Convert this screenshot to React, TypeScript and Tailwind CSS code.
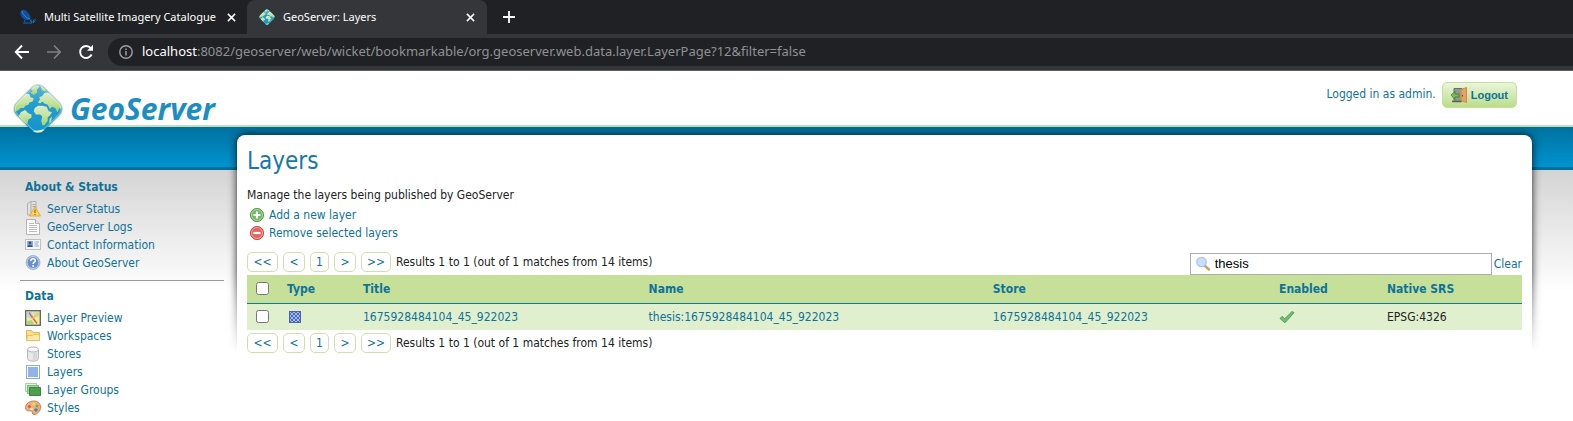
import type { ReactNode } from "react";

function Globe({ className }: { className: string }) {
  return (
    <svg viewBox="0 0 52 52" className={className} aria-hidden="true">
      <defs>
        <linearGradient id="sea" x1="0" y1="0" x2="1" y2="1">
          <stop offset="0" stopColor="#6dbbd8" />
          <stop offset="0.4" stopColor="#279ccf" />
          <stop offset="1" stopColor="#0f93cb" />
        </linearGradient>
        <linearGradient id="land" x1="0" y1="0" x2="0" y2="1">
          <stop offset="0" stopColor="#dcecd0" />
          <stop offset="0.5" stopColor="#c5e39c" />
          <stop offset="1" stopColor="#9ad56c" />
        </linearGradient>
        <clipPath id="diamond">
          <rect x="8" y="8" width="36" height="36" rx="8" transform="rotate(45 26 26)" />
        </clipPath>
      </defs>
      <rect x="7" y="7" width="38" height="38" rx="9" transform="rotate(45 26 26)" fill="#2a6070" opacity="0.25" />
      <rect x="8" y="8" width="36" height="36" rx="8" transform="rotate(45 26 26)" fill="url(#sea)" />
      <g clipPath="url(#diamond)" fill="url(#land)">
        <path d="M2 24 L8 17 L14 12 L18 12 L19 15 L22 16 L21 19 L18 20 L17 22 L14 23 L13 25 L10 25 L8 27 L4 29Z" />
        <path d="M10 29 L14 27 L17 30 L20 31 L20 34 L17 36 L16 40 L12 38 L8 33Z" />
        <path d="M19 6 L26 3 L27 6 L25 8 L25 11 L22 13 L19 11 L21 9Z" />
        <path d="M28 4 L33 7 L33 10 L30 9Z" />
        <path d="M26 20 L28 17 L27 15 L30 14 L32 11 L36 11 L39 13 L50 22 L50 27 L46 25 L44 29 L42 25 L39 24 L37 26 L35 22 L32 21 L30 19 L28 21Z" />
        <path d="M23 25 L26 23 L30 23 L34 24 L36 28 L39 29 L37 32 L35 34 L35 37 L32 41 L30 41 L29 37 L30 33 L28 31 L24 31 L22 28Z" />
        <path d="M37 35 L39 33 L38 38 L36 39Z" />
        <path d="M18 48 L22 46 L26 46 L30 45 L34 46 L30 52 L22 52Z" />
      </g>
      <rect x="9" y="9" width="34" height="34" rx="7" transform="rotate(45 26 26)" fill="none" stroke="#ffffff" strokeOpacity="0.3" strokeWidth="1" />
    </svg>
  );
}

function Icon({ children, className = "size-4" }: { children: ReactNode; className?: string }) {
  return (
    <svg viewBox="0 0 16 16" className={className + " shrink-0"} aria-hidden="true">
      {children}
    </svg>
  );
}

const icons = {
  status: (
    <Icon>
      <path d="M2.500 2.500 6 .5h5v11l-3 2.500H2.500z" fill="#e2e2e2" stroke="#b0b0b0" />
      <path d="M6 1v12M7.500 3.500h3M7.500 5.500h3" stroke="#a8a8a8" fill="none" />
      <path d="M10 5.500 15.500 15h-11z" fill="#fcd35c" stroke="#dfaa3a" strokeLinejoin="round" />
      <path d="M10 8.500v3.500M10 13v1" stroke="#8a6a24" strokeWidth="1.200" />
    </Icon>
  ),
  page: (
    <Icon>
      <path d="M1.500.5h9l4 4v11h-13z" fill="#fafafa" stroke="#b4b4b4" />
      <path d="M10.500.5v4h4" fill="#e4e4e4" stroke="#b4b4b4" />
      <path d="M4 4.500h5M4 6.500h8M4 8.500h8M4 10.500h8M4 12.500h8" stroke="#bcbcbc" />
    </Icon>
  ),
  card: (
    <Icon>
      <rect x=".5" y="2.500" width="15" height="10" fill="#f6f6f6" stroke="#c0c0c0" />
      <rect x="2" y="4" width="6" height="6" fill="#86aede" />
      <circle cx="5" cy="6" r="1.400" fill="#3a5585" />
      <path d="M2.500 10c0-3 5-3 5 0z" fill="#3a5585" />
      <path d="M9.500 5H14M9.500 7H13M9.500 9H14" stroke="#8fa9cc" />
    </Icon>
  ),
  help: (
    <Icon>
      <circle cx="8" cy="7.500" r="7" fill="#6a90cc" stroke="#a5b7d8" />
      <circle cx="8" cy="7.500" r="6" fill="none" stroke="#dfe8f6" strokeWidth=".8" />
      <path d="M5.800 5.900c0-3 4.500-2.800 4.500-.2 0 1.500-2.200 1.600-2.200 3.300" fill="none" stroke="#fff" strokeWidth="1.600" />
      <circle cx="8.100" cy="11.100" r="1" fill="#fff" />
    </Icon>
  ),
  preview: (
    <Icon>
      <rect x=".7" y=".7" width="14.600" height="14.600" fill="#f6ea9c" stroke="#53606e" strokeWidth="1.300" />
      <path d="M2 2h5l2 5-3 2-4-2z" fill="#b9d6ee" />
      <path d="M8 2h6v5l-4 1z" fill="#d2e596" />
      <path d="M2 11l5-1 2 4H2z" fill="#b2d47c" />
      <path d="m4 2.500 2 3 3 4 3 4" stroke="#dc5a40" strokeWidth="1.300" fill="none" />
      <path d="M13.500 3 7 9" stroke="#f1bd62" strokeWidth="1.200" />
    </Icon>
  ),
  folder: (
    <Icon>
      <path d="M1.500 12.500v-10h5l1.500 2h6.500v8z" fill="#fbe08a" stroke="#e4b558" />
      <path d="m1.500 12.500 1-5h5l1-1h6v6z" fill="#fdeaa5" stroke="#e9bd60" />
    </Icon>
  ),
  store: (
    <Icon>
      <path d="M2.500 3.500v9c0 3.500 11 3.500 11 0v-9" fill="#e8e8e8" stroke="#b8b8b8" />
      <ellipse cx="8" cy="3.500" rx="5.500" ry="2.500" fill="#f8f8f8" stroke="#b8b8b8" />
      <path d="M11 6.500v7M9 7v7" stroke="#c8c8c8" />
    </Icon>
  ),
  layer: (
    <Icon>
      <rect x="1.500" y="1.500" width="13" height="13" fill="#fff" stroke="#8fabde" />
      <rect x="3" y="3" width="10" height="10" fill="#92b2e8" />
    </Icon>
  ),
  group: (
    <Icon>
      <path d="M.5 1.500h11v8H.5z" fill="#dff2dd" stroke="#a5d2a2" />
      <path d="M2.500 3.500h11v8h-11z" fill="#a5d6a0" stroke="#7cba79" />
      <path d="M4.500 5.500h11v8h-11z" fill="#4fa04d" stroke="#3b8540" />
    </Icon>
  ),
  palette: (
    <Icon>
      <path d="M9 1c4 0 6.500 2.500 6.500 6 0 4.500-3.500 7.500-6.500 7.500-2.500 0-1-3-2.500-3.500S.5 12 .5 7.500C.5 4 4.500 1 9 1z" fill="#eeb07a" stroke="#c97d4a" />
      <circle cx="4.500" cy="6.500" r="1.500" fill="#e4553e" />
      <circle cx="8.500" cy="4" r="1.500" fill="#f3dc59" />
      <circle cx="12" cy="6" r="1.500" fill="#6fae4d" />
      <circle cx="11" cy="10" r="1.800" fill="#4d7fc0" />
      <circle cx="6.500" cy="9" r="1.200" fill="#fff" />
    </Icon>
  ),
};

const menus = [
  {
    title: "About & Status",
    items: [
      ["Server Status", icons.status],
      ["GeoServer Logs", icons.page],
      ["Contact Information", icons.card],
      ["About GeoServer", icons.help],
    ],
  },
  {
    title: "Data",
    items: [
      ["Layer Preview", icons.preview],
      ["Workspaces", icons.folder],
      ["Stores", icons.store],
      ["Layers", icons.layer],
      ["Layer Groups", icons.group],
      ["Styles", icons.palette],
    ],
  },
] as { title: string; items: [string, ReactNode][] }[];

function CloseIcon() {
  return (
    <svg viewBox="0 0 10 10" className="size-[9px]" aria-hidden="true">
      <path d="m1 1 8 8M9 1 1 9" stroke="#fff" strokeWidth="1.700" />
    </svg>
  );
}

function BrowserBar() {
  return (
    <div className="bg-[#202124] font-['Noto_Sans',sans-serif] text-white">
      <div className="flex h-[34px] items-stretch">
        <div className="flex w-[247px] shrink-0 items-center pl-5 pr-[11px]">
          <svg viewBox="0 0 16 16" className="mr-2 size-4" aria-hidden="true">
            <path d="M2 1c3-1 5 1 7 4 2 2 2 5 0 6-3 1-6-1-8-4C0 5 0 2 2 1z" fill="#12509f" />
            <path d="M2 2c1 4 4 7 8 8" stroke="#2d8be0" fill="none" />
            <path d="M5 11l-1 3h6" stroke="#12509f" strokeWidth="1.500" fill="none" />
            <path d="M12 11h-1.500v1.500H12V14h-2M16 11h-2.500v3M13.500 12.500H15" stroke="#2268b5" fill="none" />
          </svg>
          <span className="flex-1 whitespace-nowrap text-[11px]">Multi Satellite Imagery Catalogue</span>
          <button type="button" aria-label="Close tab"><CloseIcon /></button>
        </div>
        <div className="flex w-[240px] shrink-0 items-center rounded-t-lg bg-[#35363a] pl-3 pr-3">
          <Globe className="mr-2 size-4 scale-110" />
          <span className="flex-1 whitespace-nowrap text-[11px]">GeoServer: Layers</span>
          <button type="button" aria-label="Close tab"><CloseIcon /></button>
        </div>
        <button type="button" aria-label="New tab" className="ml-4">
          <svg viewBox="0 0 12 12" className="size-3" aria-hidden="true">
            <path d="M6 0v12M0 6h12" stroke="#fff" strokeWidth="1.800" />
          </svg>
        </button>
      </div>
      <div className="flex items-center border-b border-[#5c5d60] bg-[#35363a] py-1 pl-[14px]">
        <button type="button" aria-label="Back" className="mr-4">
          <svg viewBox="0 0 16 16" className="size-4" aria-hidden="true">
            <path d="M8 1.500 1.800 8 8 14.500M1.800 8H15" stroke="#fff" strokeWidth="1.900" fill="none" />
          </svg>
        </button>
        <button type="button" aria-label="Forward" className="mr-4">
          <svg viewBox="0 0 16 16" className="size-4" aria-hidden="true">
            <path d="m8 1.500 6.200 6.500L8 14.500M14.200 8H1" stroke="#808184" strokeWidth="1.700" fill="none" />
          </svg>
        </button>
        <button type="button" aria-label="Reload" className="mr-[14px]">
          <svg viewBox="0 0 16 16" className="size-4" aria-hidden="true">
            <path d="M13.600 10.500A6 6 0 1 1 12.800 4.200" stroke="#fff" strokeWidth="1.900" fill="none" />
            <path d="M15 .8v6H9z" fill="#fff" />
          </svg>
        </button>
        <div className="flex h-7 flex-1 items-center rounded-l-full bg-[#202124] pl-[11px]">
          <svg viewBox="0 0 14 14" className="mr-[9px] size-[14px]" aria-hidden="true">
            <circle cx="7" cy="7" r="6.200" fill="none" stroke="#9aa0a6" strokeWidth="1.400" />
            <path d="M7 6v4.500M7 3.400v1.500" stroke="#9aa0a6" strokeWidth="1.500" />
          </svg>
          <span className="whitespace-nowrap text-[13px] text-[#8f9195]">
            <span className="text-white">localhost</span>
            :8082/geoserver/web/wicket/bookmarkable/org.geoserver.web.data.layer.LayerPage?12&amp;filter=false
          </span>
        </div>
      </div>
    </div>
  );
}

function Header() {
  return (
    <header className="flex h-14 justify-between border-b-2 border-[#bfe0b8] bg-white pl-[10px] pr-14">
      <a href="#home" className="relative z-10 flex items-start gap-1 pt-[10px]">
        <Globe className="-mb-5 size-14 shrink-0" />
        <span className="pt-2 font-['Open_Sans',sans-serif] text-[30px] font-bold italic leading-[40px] text-[#1b8ec4]">
          GeoServer
        </span>
      </a>
      <div className="flex items-start gap-[6px] pt-[11px]">
        <span className="leading-6">Logged in as admin.</span>
        <button
          type="button"
          className="flex h-[26px] items-center gap-1 rounded-[5px] border border-[#c5e09a] bg-linear-to-b from-[#eaf5da] to-[#bbdd89] px-2 font-['Liberation_Sans',sans-serif] text-[11px] font-bold"
        >
          <Icon>
            <path d="M3 1.500h8v13H3z" fill="#8d9a8c" stroke="#66705f" />
            <path d="M10 2.500 15.500.5v15L10 13.500z" fill="#e9a25c" stroke="#c98a54" />
            <path d="M11.500 8v1.500" stroke="#6d4018" />
            <path d="M0 8l4-3.500V7h4v3H4v2.500z" fill="#7dbb5c" stroke="#3f7a34" strokeWidth=".8" />
            <path d="M1 14.500h9" stroke="#55605a" strokeWidth="1.500" />
          </Icon>
          Logout
        </button>
      </div>
    </header>
  );
}

function Sidebar() {
  return (
    <nav className="w-[237px] shrink-0 pl-5 pr-[13px] pt-[51px]">
      {menus.map((menu) => (
        <section key={menu.title} className="mb-[6px] border-b border-[#9b9b93] pb-2 pl-[5px] last:border-b-0 last:pb-0">
          <h2 className="mb-1 font-bold leading-[18px]">{menu.title}</h2>
          <ul>
            {menu.items.map(([label, icon]) => (
              <li key={label}>
                <a href="#menu" className="flex h-[18px] items-center gap-[6px]">
                  {icon}
                  <span className="pt-px leading-[17px]">{label}</span>
                </a>
              </li>
            ))}
          </ul>
        </section>
      ))}
    </nav>
  );
}

function PageButton({ children, label, className }: { children: ReactNode; label: string; className: string }) {
  return (
    <button type="button" aria-label={label} className={className + " h-5 rounded-[5px] border border-[#cfe0af] bg-white leading-4"}>
      {children}
    </button>
  );
}

function Pager() {
  return (
    <div className="flex items-center gap-[5px]">
      <PageButton label="First page" className="w-[31px]">&lt;&lt;</PageButton>
      <PageButton label="Previous page" className="w-[22px]">&lt;</PageButton>
      <PageButton label="Page 1" className="w-[19px]">1</PageButton>
      <PageButton label="Next page" className="w-[22px]">&gt;</PageButton>
      <PageButton label="Last page" className="w-[30px]">&gt;&gt;</PageButton>
      <span className="whitespace-nowrap text-[#222]">Results 1 to 1 (out of 1 matches from 14 items)</span>
    </div>
  );
}

function LayersTable() {
  return (
    <table className="w-full table-fixed text-left">
      <thead>
        <tr className="h-7 border-b border-[#0f7a90] bg-[#c6e09a] [&>th]:pl-[10px]">
          <th className="w-[30px]">
            <input type="checkbox" aria-label="Select all layers" className="-ml-px block size-[13px]" />
          </th>
          <th className="w-[76px]">Type</th>
          <th className="w-[22.4%]">Title</th>
          <th className="w-[27%]">Name</th>
          <th>Store</th>
          <th className="w-[108px]">Enabled</th>
          <th className="w-[145px]">Native SRS</th>
        </tr>
      </thead>
      <tbody>
        <tr className="h-[27px] bg-[#e0efce] [&>td]:pl-[10px]">
          <td>
            <input type="checkbox" aria-label="Select layer 1675928484104_45_922023" className="-ml-px block size-[13px]" />
          </td>
          <td>
            <svg viewBox="0 0 12 12" className="ml-[2px] size-3" aria-label="Raster layer">
              <defs>
                <pattern id="checks" width="4" height="4" patternUnits="userSpaceOnUse">
                  <rect width="4" height="4" fill="#4a68bd" />
                  <rect width="2" height="2" fill="#a6bbef" />
                  <rect x="2" y="2" width="2" height="2" fill="#a6bbef" />
                </pattern>
              </defs>
              <rect width="12" height="12" fill="url(#checks)" />
              <rect x=".5" y=".5" width="11" height="11" fill="none" stroke="#4a62b0" />
            </svg>
          </td>
          <td><a href="#layer">1675928484104_45_922023</a></td>
          <td><a href="#layer">thesis:1675928484104_45_922023</a></td>
          <td><a href="#store">1675928484104_45_922023</a></td>
          <td>
            <Icon>
              <path d="M1 9.500 3.200 7.300 5.700 9.800 13 2.500l2 1.200L6 13.800z" fill="#74be72" stroke="#4c9a52" strokeWidth=".9" strokeLinejoin="round" />
            </Icon>
          </td>
          <td className="text-[#222]">EPSG:4326</td>
        </tr>
      </tbody>
    </table>
  );
}

function ActionIcon({ d, fill, edge }: { d: string; fill: string; edge: string }) {
  return (
    <Icon>
      <circle cx="8" cy="8" r="6.600" fill={fill} stroke={edge} strokeWidth=".9" />
      <circle cx="8" cy="8" r="5.500" fill="none" stroke="#fff" strokeOpacity=".5" strokeWidth=".8" />
      <path d={d} stroke="#fff" strokeWidth="2.200" />
    </Icon>
  );
}

function LayersPanel() {
  return (
    <main className="relative mr-[41px] mt-2 min-w-0 flex-1 self-start rounded-t-lg bg-white px-[10px] shadow-[0_0_9px_rgba(0,0,0,0.85)] [clip-path:inset(-12px_-12px_0_-12px)]">
      <span className="absolute -left-3 bottom-0 h-20 w-3 bg-linear-to-b from-white/0 to-white" />
      <span className="absolute -right-3 bottom-0 h-20 w-3 bg-linear-to-b from-white/0 to-white" />
      <h1 className="pt-[10px] text-2xl leading-8 text-[#1678ab]">Layers</h1>
      <p className="mt-[9px] leading-[18px] text-[#222]">Manage the layers being published by GeoServer</p>
      <ul className="mt-[2px] pl-[2px]">
        <li>
          <a href="#add" className="flex h-[18px] items-center gap-1">
            <ActionIcon d="M8 4.500v7M4.500 8h7" fill="#6dba62" edge="#4f9648" />
            Add a new layer
          </a>
        </li>
        <li>
          <a href="#remove" className="flex h-[18px] items-center gap-1">
            <ActionIcon d="M4.500 8h7" fill="#e4645c" edge="#c0433d" />
            Remove selected layers
          </a>
        </li>
      </ul>
      <div className="mt-[10px] flex items-start justify-between">
        <Pager />
        <div className="mt-px flex items-center gap-[2px]">
          <label className="flex h-[22px] w-[302px] items-center gap-1 border border-[#a9b0a9] bg-white pl-1">
            <Icon>
              <path d="m9.500 9.500 4.500 4" stroke="#c9a06c" strokeWidth="2.400" strokeLinecap="round" />
              <circle cx="6.500" cy="6" r="4.700" fill="#c9defa" stroke="#a9c2e8" strokeWidth="1.300" />
            </Icon>
            <input
              type="text"
              defaultValue="thesis"
              aria-label="Search layers"
              className="min-w-0 flex-1 font-['Liberation_Sans',sans-serif] text-[13px] text-black outline-none"
            />
          </label>
          <a href="#clear">Clear</a>
        </div>
      </div>
      <LayersTable />
      <div className="pt-[3px]">
        <Pager />
      </div>
    </main>
  );
}

export default function App() {
  return (
    <div className="min-h-screen bg-white font-['DejaVu_Sans_Condensed','DejaVu_Sans',sans-serif] text-[12px] text-[#0f7299]">
      <BrowserBar />
      <Header />
      <div className="flex bg-[linear-gradient(to_bottom,#00719f_0,#0093cf_40px,#007099_40px,#007099_43px,#d4d4d4_43px,#ffffff_165px)]">
        <Sidebar />
        <LayersPanel />
      </div>
    </div>
  );
}
